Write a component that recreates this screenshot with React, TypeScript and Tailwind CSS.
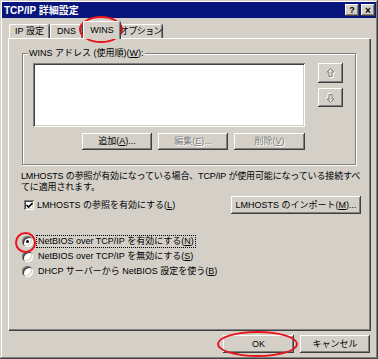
import React from "react";

const raised =
  "shadow-[inset_-1px_-1px_0_#404040,inset_1px_1px_0_#ffffff,inset_-2px_-2px_0_#808080,inset_2px_2px_0_#d4d0c8]";
const sunken =
  "shadow-[inset_1px_1px_0_#808080,inset_-1px_-1px_0_#ffffff,inset_2px_2px_0_#404040,inset_-2px_-2px_0_#d4d0c8]";

function Btn({
  children,
  className = "",
  disabled = false,
}: {
  children: React.ReactNode;
  className?: string;
  disabled?: boolean;
}) {
  return (
    <div
      className={`flex items-center justify-center bg-[#d4d0c8] ${raised} ${
        disabled ? "text-[#808080] [text-shadow:1px_1px_0_#ffffff]" : "text-black"
      } ${className}`}
    >
      {children}
    </div>
  );
}

function Arrow({ down = false }: { down?: boolean }) {
  return (
    <svg width="9" height="10" viewBox="0 0 9 10" className={down ? "rotate-180" : ""}>
      <path d="M5.5 1.5 L9 5 L7 5 L7 9.5 L4 9.5 L4 5 L2 5 Z" fill="none" stroke="#ffffff" strokeWidth="1" />
      <path d="M4.5 0.5 L8 4 L6 4 L6 8.5 L3 8.5 L3 4 L1 4 Z" fill="none" stroke="#808080" strokeWidth="1" />
    </svg>
  );
}

function Tab({ label, active = false, className = "" }: { label: string; active?: boolean; className?: string }) {
  return (
    <div
      className={`relative flex items-center justify-center whitespace-nowrap bg-[#d4d0c8] border-t border-l border-white rounded-tl-[2px] rounded-tr-[2px] shadow-[inset_-1px_0_0_#808080,1px_0_0_#404040] ${
        active ? "h-[18px] -mb-[1px] z-10 -mx-[2px]" : "h-[14px]"
      } ${className}`}
    >
      {label}
    </div>
  );
}

function Radio({ checked = false }: { checked?: boolean }) {
  return (
    <div className="relative w-[11px] h-[11px] rounded-full bg-white shadow-[inset_1px_1px_0_#808080,inset_-1px_-1px_0_#ffffff,inset_2px_2px_0_#404040,inset_-2px_-2px_0_#d4d0c8] flex items-center justify-center shrink-0">
      {checked && <div className="w-[3px] h-[3px] rounded-full bg-black" />}
    </div>
  );
}

export default function App() {
  return (
    <div
      className="relative w-[378px] h-[359px] bg-[#d4d0c8] p-[2px] flex flex-col text-[9px] leading-[11px] text-black shadow-[inset_-1px_-1px_0_#404040,inset_1px_1px_0_#d4d0c8,inset_-2px_-2px_0_#808080,inset_2px_2px_0_#ffffff]"
      style={{ fontFamily: '"Liberation Sans", "Noto Sans CJK JP", sans-serif' }}
    >
      {/* title bar */}
      <div className="h-[16px] bg-[#08157a] flex items-center pl-[2px] pr-[1px]">
        <span className="text-white font-bold text-[10px] whitespace-nowrap">TCP/IP 詳細設定</span>
        <div className="ml-auto flex items-center gap-[2px]">
          <Btn className="w-[14px] h-[12px] font-bold text-[9px]">?</Btn>
          <Btn className="w-[14px] h-[12px] font-bold text-[10px]">×</Btn>
        </div>
      </div>

      {/* tabs */}
      <div className="mt-[3px] ml-[7px] h-[17px] flex items-end">
        <Tab label="IP 設定" className="w-[40px]" />
        <Tab label="DNS" className="w-[32px] ml-[1px]" />
        <Tab label="WINS" active className="w-[37px] ml-[1px]" />
        <Tab label="オプション" className="w-[43px] ml-[1px] tracking-[-0.6px]" />
      </div>

      {/* panel */}
      <div className="mx-[6px] h-[292px] flex flex-col border-t border-l border-white shadow-[inset_-1px_-1px_0_#808080,1px_1px_0_#404040]">
        {/* group box */}
        <div className="relative mt-[14px] ml-[13px] w-[334px] h-[112px] border border-[#808080] shadow-[1px_1px_0_#ffffff,inset_1px_1px_0_#ffffff] flex">
          <span className="absolute -top-[6px] left-[5px] bg-[#d4d0c8] px-[1px] whitespace-nowrap">
            WINS アドレス (使用順)(<u>W</u>):
          </span>
          <div className="pt-[9px] pl-[10px] flex flex-col">
            <div className={`w-[272px] h-[64px] bg-white ${sunken}`} />
            <div className="mt-[6px] flex justify-end gap-[6px]">
              <Btn className="w-[70px] h-[17px]">
                追加(<u>A</u>)...
              </Btn>
              <Btn disabled className="w-[70px] h-[17px]">
                編集(<u>E</u>)...
              </Btn>
              <Btn disabled className="w-[71px] h-[17px]">
                削除(<u>V</u>)
              </Btn>
            </div>
          </div>
          <div className="pt-[9px] ml-[13px] flex flex-col gap-[5px]">
            <Btn className="w-[25px] h-[20px]">
              <Arrow />
            </Btn>
            <Btn className="w-[25px] h-[19px]">
              <Arrow down />
            </Btn>
          </div>
        </div>

        {/* description */}
        <div className="mt-[6px] pl-[12px] whitespace-nowrap tracking-[-0.15px]">
          <div>LMHOSTS の参照が有効になっている場合、TCP/IP が使用可能になっている接続すべ</div>
          <div>てに適用されます。</div>
        </div>

        {/* checkbox row */}
        <div className="mt-[3px] pl-[15px] pr-[9px] h-[18px] flex items-center">
          <div className={`w-[10px] h-[10px] bg-white ${sunken} flex items-center justify-center`}>
            <svg width="7" height="7" viewBox="0 0 7 7">
              <path d="M0.5 3 L2.5 5 L6.5 1" fill="none" stroke="#000" strokeWidth="1.6" />
            </svg>
          </div>
          <span className="ml-[3px] whitespace-nowrap">
            LMHOSTS の参照を有効にする(<u>L</u>)
          </span>
          <Btn className="ml-auto w-[130px] h-[18px] whitespace-nowrap">
            LMHOSTS のインポート(<u>M</u>)...
          </Btn>
        </div>

        {/* radios */}
        <div className="mt-[20px] pl-[13px] flex flex-col">
          <div className="h-[15px] flex items-center">
            <Radio checked />
            <span className="ml-[3px] px-[1px] border border-dotted border-black whitespace-nowrap leading-[11px]">
              NetBIOS over TCP/IP を有効にする(<u>N</u>)
            </span>
          </div>
          <div className="h-[15px] flex items-center">
            <Radio />
            <span className="ml-[5px] whitespace-nowrap">
              NetBIOS over TCP/IP を無効にする(<u>S</u>)
            </span>
          </div>
          <div className="h-[15px] flex items-center">
            <Radio />
            <span className="ml-[5px] whitespace-nowrap">
              DHCP サーバーから NetBIOS 設定を使う(<u>B</u>)
            </span>
          </div>
        </div>
      </div>

      {/* footer buttons */}
      <div className="mt-[5px] mr-[6px] flex justify-end gap-[6px]">
        <Btn className="w-[71px] h-[18px]">OK</Btn>
        <Btn className="w-[70px] h-[18px]">キャンセル</Btn>
      </div>

      {/* red annotation ellipses */}
      <div className="absolute left-[79px] top-[16px] w-[44px] h-[27px] rounded-[50%] border-2 border-[#e8141c] pointer-events-none" />
      <div className="absolute left-[15px] top-[232px] w-[21px] h-[21px] rounded-[50%] border-2 border-[#e8141c] pointer-events-none" />
      <div className="absolute left-[217px] top-[331px] w-[81px] h-[26px] rounded-[50%] border-2 border-[#e8141c] pointer-events-none" />
    </div>
  );
}
